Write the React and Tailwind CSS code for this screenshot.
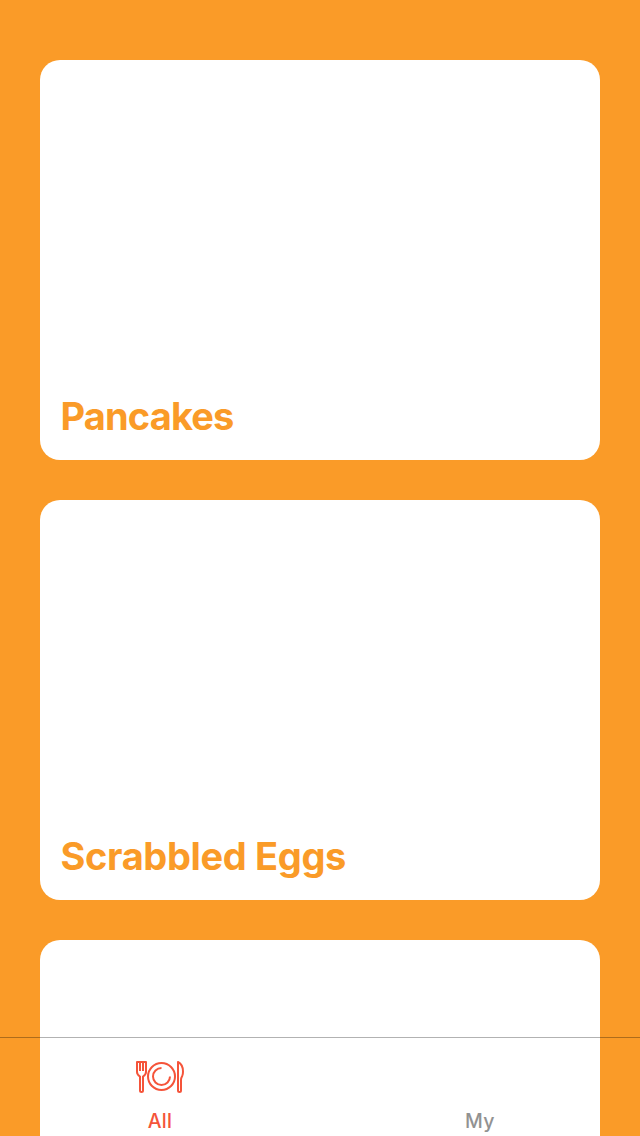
const recipes = [
  { title: 'Pancakes', tracking: 'tracking-[-0.85px]' },
  { title: 'Scrabbled Eggs', tracking: 'tracking-[-0.35px]' },
  { title: '', tracking: '' },
];

function RecipeCard({ title, tracking }) {
  return (
    <article className="flex h-[400px] shrink-0 flex-col justify-end rounded-[20px] bg-white px-[20.5px] pb-[21px]">
      <h2
        className={`text-[38px] leading-[46px] font-bold whitespace-nowrap text-[#fa9b28] ${tracking}`}
      >
        {title}
      </h2>
    </article>
  );
}

function DiningIcon() {
  return (
    <svg
      className="h-8 w-12"
      viewBox="0 0 48 32"
      fill="none"
      stroke="currentColor"
      strokeWidth="2"
      strokeLinejoin="round"
    >
      <path d="M1 1H10V11Q10 13.5 7 15.5V29.5Q7 31 5.5 31Q4 31 4 29.5V15.5Q1 13.5 1 11Z" />
      <path d="M4 1V10M7 1V10" />
      <circle cx="25.5" cy="15.5" r="13.5" />
      <path d="M25.5 7A8.5 8.5 0 1 0 34 15.5" />
      <path d="M42 1V29.5Q42 31 43.5 31Q45 31 45 29.5V19Q45 17 46.2 15Q47 13.5 47 10.5Q47 3.5 42 1Z" />
    </svg>
  );
}

export default function App() {
  return (
    <div className="relative h-[1136px] w-[640px] overflow-hidden bg-[#fa9b28] font-['Inter',sans-serif]">
      <main className="flex h-full flex-col gap-10 overflow-hidden px-10 pt-[60px]">
        {recipes.map((recipe, index) => (
          <RecipeCard key={index} {...recipe} />
        ))}
      </main>
      <nav className="absolute inset-x-0 bottom-0 grid h-[99px] grid-cols-2 border-t border-black/30 text-[19.5px] leading-6 font-medium tracking-[0.35px]">
        <button className="flex flex-col items-center pt-[23px] text-[#f5543a]">
          <DiningIcon />
          <span className="mt-4">All</span>
        </button>
        <button className="flex flex-col items-center pt-[71px] text-[#929292]">
          <span>My</span>
        </button>
      </nav>
    </div>
  );
}
